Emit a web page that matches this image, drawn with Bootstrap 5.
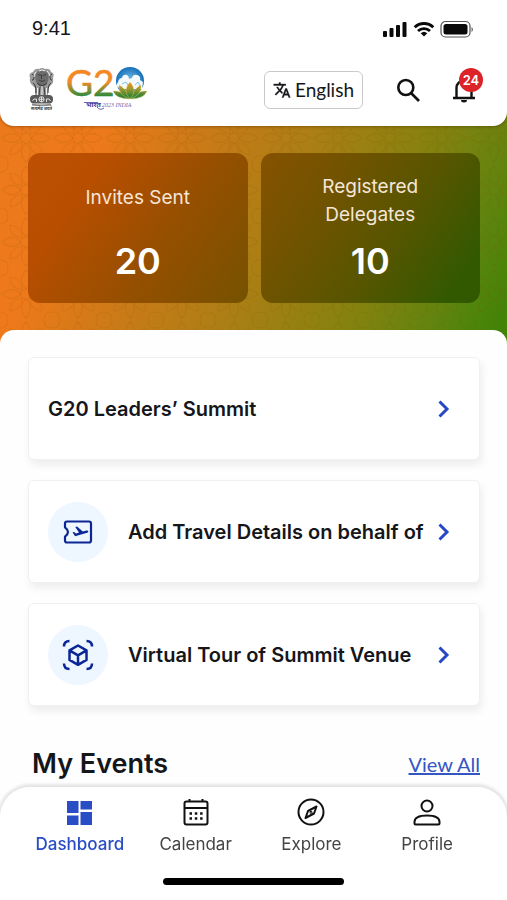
<!DOCTYPE html>
<html lang="en">
<head>
<meta charset="utf-8">
<meta name="viewport" content="width=device-width, initial-scale=1">
<title>G20 Dashboard</title>
<link href="https://cdn.jsdelivr.net/npm/bootstrap@5.3.0/dist/css/bootstrap.min.css" rel="stylesheet">
<style>
body { font-family: Inter, "Noto Sans", sans-serif; color: #15161a; background: #fefefe; }
svg { display: block; flex: none; }
.font-lato { font-family: Lato, sans-serif; }
.app-header { border-radius: 0 0 14px 14px; padding: 16px 28px 12px 28px; z-index: 2; box-shadow: 0 1px 3px rgba(60,30,0,.35); }
.status-row { height: 24px; padding: 0 4px; }
.clock { font: 20px/24px "Liberation Sans", sans-serif; }
.brand-row { margin-top: 26px; height: 48px; }
.logo { overflow: visible; }
.tools { gap: 33px; }
.lang-btn { height: 38px; padding: 0 8px; gap: 4px; border: 1px solid #c9c9c9; border-radius: 6px; font-size: 19px; line-height: 24px; color: #15161a; background: #fff; }
.icon-btn { border: 0; padding: 0; background: none; color: #111; }
.alert-count { position: absolute; left: 6px; top: -9px; width: 24px; height: 24px; border-radius: 50%; background: #dc2328; color: #fff; font-size: 13px; line-height: 24px; font-weight: 600; }
.hero { margin-top: -14px; padding: 41px 27px 41px 28px; background: linear-gradient(115deg, #ec7a1c 0%, #ee791a 18%, #cc7a18 34%, #a97f14 54%, #82820f 74%, #62840e 86%, #428408 97%); overflow: hidden; }
.hero-pattern { position: absolute; inset: 0; width: 100%; height: 100%; }
.stats { gap: 13px; }
.stat { flex: 1 1 0; min-height: 150px; border-radius: 12px; padding: 20px 16px; color: #fff; }
.stat-orange { background: linear-gradient(125deg, #be5004 0%, #b84e00 25%, #964f00 60%, #755200 100%); }
.stat-green { background: linear-gradient(125deg, #865200 0%, #725300 28%, #565500 60%, #335900 88%, #315800 100%); }
.stat-label { min-height: 50px; font-size: 19px; line-height: 28px; color: #f6e6d8; max-width: 120px; }
.stat-value { font-size: 36px; line-height: 44px; font-weight: 600; }
.sheet { margin-top: -14px; border-radius: 14px 14px 0 0; padding: 27px 27px 125px 28px; background: #fefefe; }
.links { gap: 20px; }
.link-card { min-height: 103px; padding: 0 29px 0 19px; border: 1px solid #f0f0f0; border-radius: 6px; background: #fff; box-shadow: 2px 5px 9px rgba(0,0,0,.07); color: #15161a; font-size: 20px; line-height: 28px; font-weight: 600; text-decoration: none; }
.link-text { flex: 1 1 0; min-width: 0; overflow: hidden; white-space: nowrap; }
.disc { width: 60px; height: 60px; border-radius: 50%; background: #eef6ff; flex: none; margin-right: 20px; color: #0b2795; }
.events-row { margin-top: 40px; padding-left: 4px; }
.events-title { font-size: 27px; line-height: 36px; font-weight: 600; }
.view-all { font-size: 20px; line-height: 24px; color: #3455c4; }
.tabbar { background: #fff; border-radius: 30px 30px 0 0; padding: 10px 22px 15px; box-shadow: 0 -1px 3px 2px rgba(0,0,0,.1); }
.tab { flex: 1 1 0; gap: 5px; color: #444; font-size: 17px; line-height: 24px; text-decoration: none; }
.tab svg { color: #111; }
.tab.current, .tab.current svg { color: #294dc4; }
.tab.current { font-weight: 500; }
.home-bar { width: 181px; height: 7px; border-radius: 4px; background: #000; margin-top: 22px; }
</style>
<script src="https://cdn.jsdelivr.net/npm/bootstrap@5.3.0/dist/js/bootstrap.bundle.min.js"></script>
</head>
<body>
<header class="app-header bg-white position-relative">
  <div class="status-row d-flex align-items-center justify-content-between">
    <span class="clock">9:41</span>
    <svg width="92" height="22" viewBox="0 -3 92 22" aria-hidden="true">
      <g fill="#0a0a0a"><rect x="0" y="11" width="4" height="6" rx="1"/><rect x="6.500" y="8" width="4" height="9" rx="1"/><rect x="13" y="5" width="4" height="12" rx="1"/><rect x="19.500" y="2" width="4" height="15" rx="1"/>
      <path d="M41 16.500l-3.300-3.200a4.800 4.800 0 0 1 6.600 0z"/><rect x="60.500" y="4" width="24" height="10.500" rx="2.500"/><path d="M88.500 7v5c2-1 2-4 0-5z" opacity=".6"/></g>
      <g fill="none" stroke="#0a0a0a"><path d="M31.700 7.300a13.300 13.300 0 0 1 18.600 0M35 11a8.600 8.600 0 0 1 12 0" stroke-width="2.800"/><rect x="58" y="1.500" width="29" height="15.500" rx="4.500" stroke-width="1.200" opacity=".7"/></g>
    </svg>
  </div>
  <div class="brand-row d-flex align-items-center">
    <svg class="logo" width="28" height="46" viewBox="0 0 28 46" role="img" aria-label="State Emblem of India">
      <path d="M5 5Q7 1 11 2Q14 0 17 2Q22 1 23 5Q27 6 25 11Q26 16 23 18L20 21V29H7V21L4 18Q1 15 2 11Q0 6 5 5z" fill="#9a9a9a"/>
      <path d="M8 6q6-6 12 0 2 7-2 12-4 4-8 0-4-5-2-12z" fill="#6c6c6c"/>
      <path d="M10 7q1 2 3 1M15 8q2 1 3-1M13.500 8v4M11 13q3 3 6 0M9 16q5 5 10 0M4 7q3 1 2 4t-2 2M24 7q-3 1-2 4t2 2M5 16q3 1 3 10M23 16q-3 1-3 10M12 20l-1 9M16 20l1 9" fill="none" stroke="#3c3c3c"/>
      <path d="M8 5q-2 2-2 5M19 4q2 2 3 5M11 4q3-2 6 0M9.500 21v8M14 19v10M18.500 21v8" fill="none" stroke="#eee"/>
      <rect x="2" y="28" width="23" height="8.500" rx="4" fill="#5a5a5a"/>
      <g fill="none" stroke="#e4e4e4"><circle cx="13.500" cy="32.300" r="2.600"/><path d="M13.500 30v5M11 32.300h5M4.500 34q1-3 4-2v3M22.500 34q-1-3-4-2v3"/></g>
      <path d="M4 36.500q9.500 2 19 0v2q-9.500 1.500-19 0z" fill="#888"/>
      <text x="13.500" y="43" text-anchor="middle" font-family="Noto Sans, sans-serif" font-weight="700" font-size="4" fill="#333">सत्यमेव जयते</text>
    </svg>
    <svg class="logo ms-2" width="86" height="46" viewBox="0 0 86 46" role="img" aria-label="G20 Bharat 2023 India">
      <defs>
        <linearGradient id="tri" x1="0" y1="2" x2="0" y2="29" gradientUnits="userSpaceOnUse"><stop offset="0" stop-color="#f8861f"/><stop offset=".5" stop-color="#ec8c28"/><stop offset=".75" stop-color="#8c8e30"/><stop offset="1" stop-color="#2c8a3c"/></linearGradient>
        <radialGradient id="globe"><stop offset="0" stop-color="#7cc4ec"/><stop offset="1" stop-color="#1670b8"/></radialGradient>
        <linearGradient id="lotus" x1="0" y1="16" x2="0" y2="31" gradientUnits="userSpaceOnUse"><stop offset="0" stop-color="#ef9226"/><stop offset=".5" stop-color="#a69a2a"/><stop offset="1" stop-color="#388535"/></linearGradient>
      </defs>
      <g fill="url(#tri)" stroke="url(#tri)" stroke-width=".6" font-family="Lato, sans-serif" font-size="37"><text x="2" y="29">G</text><text x="29" y="29">2</text></g>
      <g transform="translate(0 -3)">
        <circle cx="66" cy="17" r="14" fill="url(#globe)"/>
        <path d="M54 18q1-4 4-4 1-4 5-3 2 1 2 4l3-1q1-4 5-3 4 1 3 5l3 2-1 7H57l-5-3z" fill="#f4fafc"/>
        <path d="M58 20l4-2 3 5M71 21l3-3 2 4" fill="none" stroke="#80c4e8"/>
        <g fill="url(#lotus)" stroke="#f5d27a" stroke-width=".4" transform="translate(0 1)"><path d="M66 34Q52 34 49 26Q58 25 66 34zM66 34Q80 34 83 26Q74 25 66 34z"/><path d="M66 34Q54 30 55 20Q63 24 66 34zM66 34Q78 30 77 20Q69 24 66 34z"/><path d="M66 34Q58 26 66 17Q74 26 66 34z"/></g>
      </g>
      <text x="22" y="40" font-family="Noto Sans, sans-serif" font-weight="700" font-size="7" fill="#463a9c">भारत</text>
      <text x="38" y="40" font-family="Liberation Serif, serif" font-style="italic" font-size="6" fill="#7166ae">2023 INDIA</text>
      <path d="M20 35.500h14M33 40q3 4 7 1" fill="none" stroke="#463a9c" stroke-width=".8"/>
    </svg>
    <div class="tools d-flex align-items-center ms-auto me-1">
      <button type="button" class="lang-btn font-lato d-flex align-items-center">
        <svg width="18" height="18" viewBox="0 0 24 24" fill="currentColor" aria-hidden="true"><path d="M12.870 15.070l-2.540-2.510.03-.03A17.520 17.520 0 0 0 14.070 6H17V4h-7V2H8v2H1v2h11.170C11.500 7.920 10.440 9.750 9 11.350 8.070 10.320 7.300 9.190 6.690 8h-2c.73 1.630 1.730 3.170 2.980 4.560l-5.090 5.020L4 19l5-5 3.110 3.110.76-2.040zM18.500 10h-2L12 22h2l1.120-3h4.750L21 22h2l-4.500-12zm-2.620 7l1.620-4.330L19.120 17h-3.240z" stroke="currentColor" stroke-width=".5"/></svg>
        <span>English</span>
      </button>
      <button type="button" class="icon-btn" aria-label="Search">
        <svg width="24" height="24" viewBox="0 0 24 24" fill="none" stroke="currentColor" stroke-width="2.600"><circle cx="9.800" cy="9.500" r="7.500"/><path d="M15 15l8 8"/></svg>
      </button>
      <button type="button" class="icon-btn position-relative" aria-label="Notifications, 24 new">
        <svg width="22" height="26" viewBox="0 0 22 26" fill="none" stroke="currentColor" stroke-width="2.400"><path d="M0 21h22M3.500 21V11a7.500 7.500 0 0 1 15 0v10"/><path d="M8 23h6a3 2.500 0 0 1-6 0z" fill="currentColor" stroke="none"/></svg>
        <span class="alert-count">24</span>
      </button>
    </div>
  </div>
</header>

<section class="hero position-relative">
  <svg class="hero-pattern" aria-hidden="true">
    <defs><pattern id="petals" width="52" height="52" patternUnits="userSpaceOnUse">
      <g fill="none" stroke="#7a4a00" stroke-opacity=".12" stroke-width="1.200"><circle cx="26" cy="26" r="5"/><path d="M26 21q-9-9 0-19 9 10 0 19M26 31q-9 9 0 19 9-10 0-19M21 26q-9-9-19 0 10 9 19 0M31 26q9-9 19 0-10 9-19 0M22 22Q10 20 10 9q12 1 12 13M30 22q12-2 12-13-12 1-12 13M22 30q-12 2-12 13 12-1 12-13M30 30q12 2 12 13-12-1-12-13M0 8q8 0 8-8M44 0q0 8 8 8M0 44q8 0 8 8M44 52q0-8 8-8"/></g>
    </pattern></defs>
    <rect width="100%" height="100%" fill="url(#petals)"/>
  </svg>
  <div class="stats d-flex position-relative">
    <div class="stat stat-orange d-flex flex-column align-items-center text-center">
      <div class="stat-label d-flex align-items-center justify-content-center">Invites Sent</div>
      <div class="stat-value mt-auto">20</div>
    </div>
    <div class="stat stat-green d-flex flex-column align-items-center text-center">
      <div class="stat-label d-flex align-items-center justify-content-center">Registered Delegates</div>
      <div class="stat-value mt-auto">10</div>
    </div>
  </div>
</section>

<main class="sheet position-relative">
  <div class="links d-flex flex-column">
    <a href="#summit" class="link-card d-flex align-items-center">
      <span class="link-text">G20 Leaders’ Summit</span>
      <svg width="12" height="18" viewBox="0 0 12 18" fill="none" stroke="#2748c4" stroke-width="3"><path d="M1.500 1.500L9 9l-7.500 7.500"/></svg>
    </a>
    <a href="#travel" class="link-card d-flex align-items-center">
      <span class="disc d-flex align-items-center justify-content-center">
        <svg width="30" height="24" viewBox="0 0 30 24" fill="none" stroke="currentColor" stroke-width="2.200" stroke-linejoin="round"><path d="M4 1.500h22q2 0 2 2v17q0 2-2 2H4q-2 0-2-2v-3.800Q8 12 2 7.300V3.500q0-2 2-2z"/><path d="M9.500 12.300l1.500-.4 2 1.500 3-.8L12.300 7l1.800-.5 5.700 5 3.800-1q1.500-.2 1.700.8.200 1-1.200 1.500l-12 3.400z" fill="currentColor" stroke="none"/></svg>
      </span>
      <span class="link-text">Add Travel Details on behalf of</span>
      <svg width="12" height="18" viewBox="0 0 12 18" fill="none" stroke="#2748c4" stroke-width="3"><path d="M1.500 1.500L9 9l-7.500 7.500"/></svg>
    </a>
    <a href="#tour" class="link-card d-flex align-items-center">
      <span class="disc d-flex align-items-center justify-content-center">
        <svg width="32" height="32" viewBox="0 0 32 32" fill="none" stroke="currentColor" stroke-width="2.500" stroke-linejoin="round"><path d="M16 6.500l8.500 4.900v9.500L16 25.800l-8.500-4.900v-9.500zM7.500 11.400L16 16.300l8.500-4.900M16 16.300v9.500"/><path d="M2 7.500Q2 2 7.500 2M24.500 2Q30 2 30 7.500M30 24.500q0 5.500-5.500 5.500M7.500 30Q2 30 2 24.500"/></svg>
      </span>
      <span class="link-text">Virtual Tour of Summit Venue</span>
      <svg width="12" height="18" viewBox="0 0 12 18" fill="none" stroke="#2748c4" stroke-width="3"><path d="M1.500 1.500L9 9l-7.500 7.500"/></svg>
    </a>
  </div>
  <div class="events-row d-flex align-items-center justify-content-between">
    <h2 class="events-title mb-0">My Events</h2>
    <a href="#events" class="view-all font-lato">View All</a>
  </div>
</main>

<nav class="tabbar fixed-bottom" aria-label="Main">
  <div class="d-flex">
    <a href="#dashboard" class="tab current d-flex flex-column align-items-center" aria-current="page">
      <svg width="30" height="30" viewBox="0 0 30 30" fill="currentColor"><path d="M2 4h11.500v12H2zM15.500 4H27v8.500H15.500zM15.500 15H27v13H15.500zM2 18.500h11.500V28H2z"/></svg>
      Dashboard</a>
    <a href="#calendar" class="tab d-flex flex-column align-items-center">
      <svg width="30" height="30" viewBox="0 0 30 30" fill="none" stroke="currentColor" stroke-width="2"><rect x="3.500" y="4.500" width="23" height="23" rx="2"/><path d="M3.500 11h23M8.500 2v3M21.500 2v3"/><path d="M8.500 16.500H11M13.800 16.500h2.500M19.100 16.500h2.500M8.500 21.500H11M13.800 21.500h2.500M19.100 21.500h2.500" stroke-width="2.500"/></svg>
      Calendar</a>
    <a href="#explore" class="tab d-flex flex-column align-items-center">
      <svg width="30" height="30" viewBox="0 0 30 30" fill="none" stroke="currentColor" stroke-width="2" stroke-linejoin="round"><circle cx="15" cy="15" r="12.500"/><path d="M20.500 9.500l-2.500 7-8.500 4.500 2.500-7z"/><circle cx="15" cy="15.300" r=".5"/></svg>
      Explore</a>
    <a href="#profile" class="tab d-flex flex-column align-items-center">
      <svg width="30" height="30" viewBox="0 0 30 30" fill="none" stroke="currentColor" stroke-width="2"><circle cx="15" cy="9" r="5.500"/><path d="M2.500 25v1.500q0 1 1 1h23q1 0 1-1V25q0-6.500-12.500-6.500T2.500 25z"/></svg>
      Profile</a>
  </div>
  <div class="home-bar mx-auto"></div>
</nav>
</body>
</html>
